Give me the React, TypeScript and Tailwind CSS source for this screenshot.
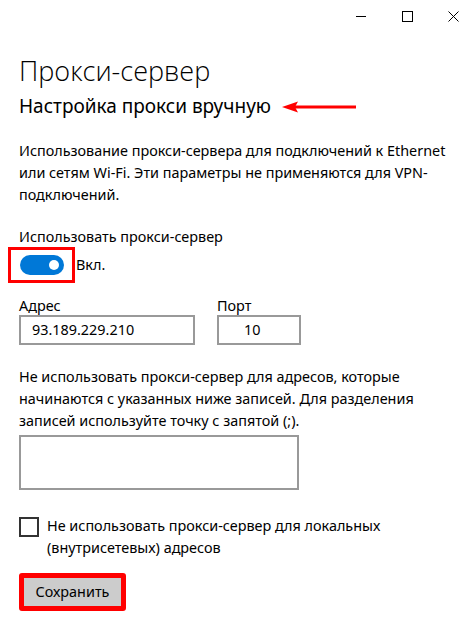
import React from "react";

export default function App() {
  return (
    <div
      className="w-[468px] h-[633px] bg-white overflow-hidden text-black text-[14.4px]"
      style={{ fontFamily: '"Noto Sans", "Open Sans", sans-serif' }}
    >
      {/* Title bar */}
      <div className="flex justify-end h-[32px] mr-[-8px]">
        <div className="w-[46px] h-[32px] flex items-center justify-center">
          <div className="w-[10px] h-px bg-black" />
        </div>
        <div className="w-[46px] h-[32px] flex items-center justify-center">
          <div className="w-[11px] h-[11px] border border-black" />
        </div>
        <div className="w-[46px] h-[32px] flex items-center justify-center">
          <svg width="11" height="11" viewBox="0 0 11 11">
            <path d="M0.5 0.5 L10.5 10.5 M10.5 0.5 L0.5 10.5" stroke="black" strokeWidth="1" />
          </svg>
        </div>
      </div>

      <div className="pl-[19px]">
        <div
          className="mt-[21px] text-[27px] leading-[36px] font-light"
          style={{ fontFamily: '"Open Sans", "Noto Sans", sans-serif' }}
        >
          Прокси-сервер
        </div>
        <div className="flex items-center mt-[3px]">
          <div className="text-[19px] leading-[28px]">Настройка прокси вручную</div>
          <svg width="74" height="12" viewBox="0 0 74 12" className="ml-[11px] mt-[2px]">
            <polygon points="0,6 16,0.5 13,6 16,11.5" fill="#ff0000" />
            <rect x="12" y="4.5" width="62" height="3" fill="#ff0000" />
          </svg>
        </div>

        <p className="mt-[20px] leading-[22px] whitespace-nowrap">
          Использование прокси-сервера для подключений к Ethernet
          <br />
          или сетям Wi-Fi. Эти параметры не применяются для VPN-
          <br />
          подключений.
        </p>

        <div className="mt-[20px] leading-[22px]">Использовать прокси-сервер</div>
        <div className="flex items-center mt-[-1px]">
          <div className="ml-[-11px] border-[3px] border-[#ff0000] pl-[9px] pr-[8px] pt-[5px] pb-[5px]">
            <div className="w-[44px] h-[20px] rounded-full bg-[#0078d7] flex items-center justify-end pr-[5px]">
              <div className="w-[10px] h-[10px] rounded-full bg-white" />
            </div>
          </div>
          <span className="ml-[1px] leading-[22px]">Вкл.</span>
        </div>

        <div className="flex mt-[13px] gap-[22px]">
          <div className="flex flex-col">
            <span className="leading-[19px]">Адрес</span>
            <div className="w-[176px] h-[30px] border-2 border-[#999999] flex items-center pl-[11px]">
              93.189.229.210
            </div>
          </div>
          <div className="flex flex-col">
            <span className="leading-[19px]">Порт</span>
            <div className="w-[84px] h-[30px] border-2 border-[#999999] flex items-center pl-[25px]">
              10
            </div>
          </div>
        </div>

        <p className="mt-[21px] leading-[22px] whitespace-nowrap">
          Не использовать прокси-сервер для адресов, которые
          <br />
          начинаются с указанных ниже записей. Для разделения
          <br />
          записей используйте точку с запятой (;).
        </p>
        <div className="mt-[3px] w-[280px] h-[55px] border-2 border-[#999999]" />

        <div className="flex mt-[25px]">
          <div className="w-[20px] h-[20px] border-2 border-[#333333] mt-[2px] shrink-0" />
          <div className="ml-[8px] leading-[22px] whitespace-nowrap">
            Не использовать прокси-сервер для локальных
            <br />
            (внутрисетевых) адресов
          </div>
        </div>

        <div className="mt-[14px] w-[107px] h-[38px] border-[5px] border-[#ff0000] rounded-[3px] bg-[#cccccc] flex items-center justify-center">
          Сохранить
        </div>
      </div>
    </div>
  );
}
